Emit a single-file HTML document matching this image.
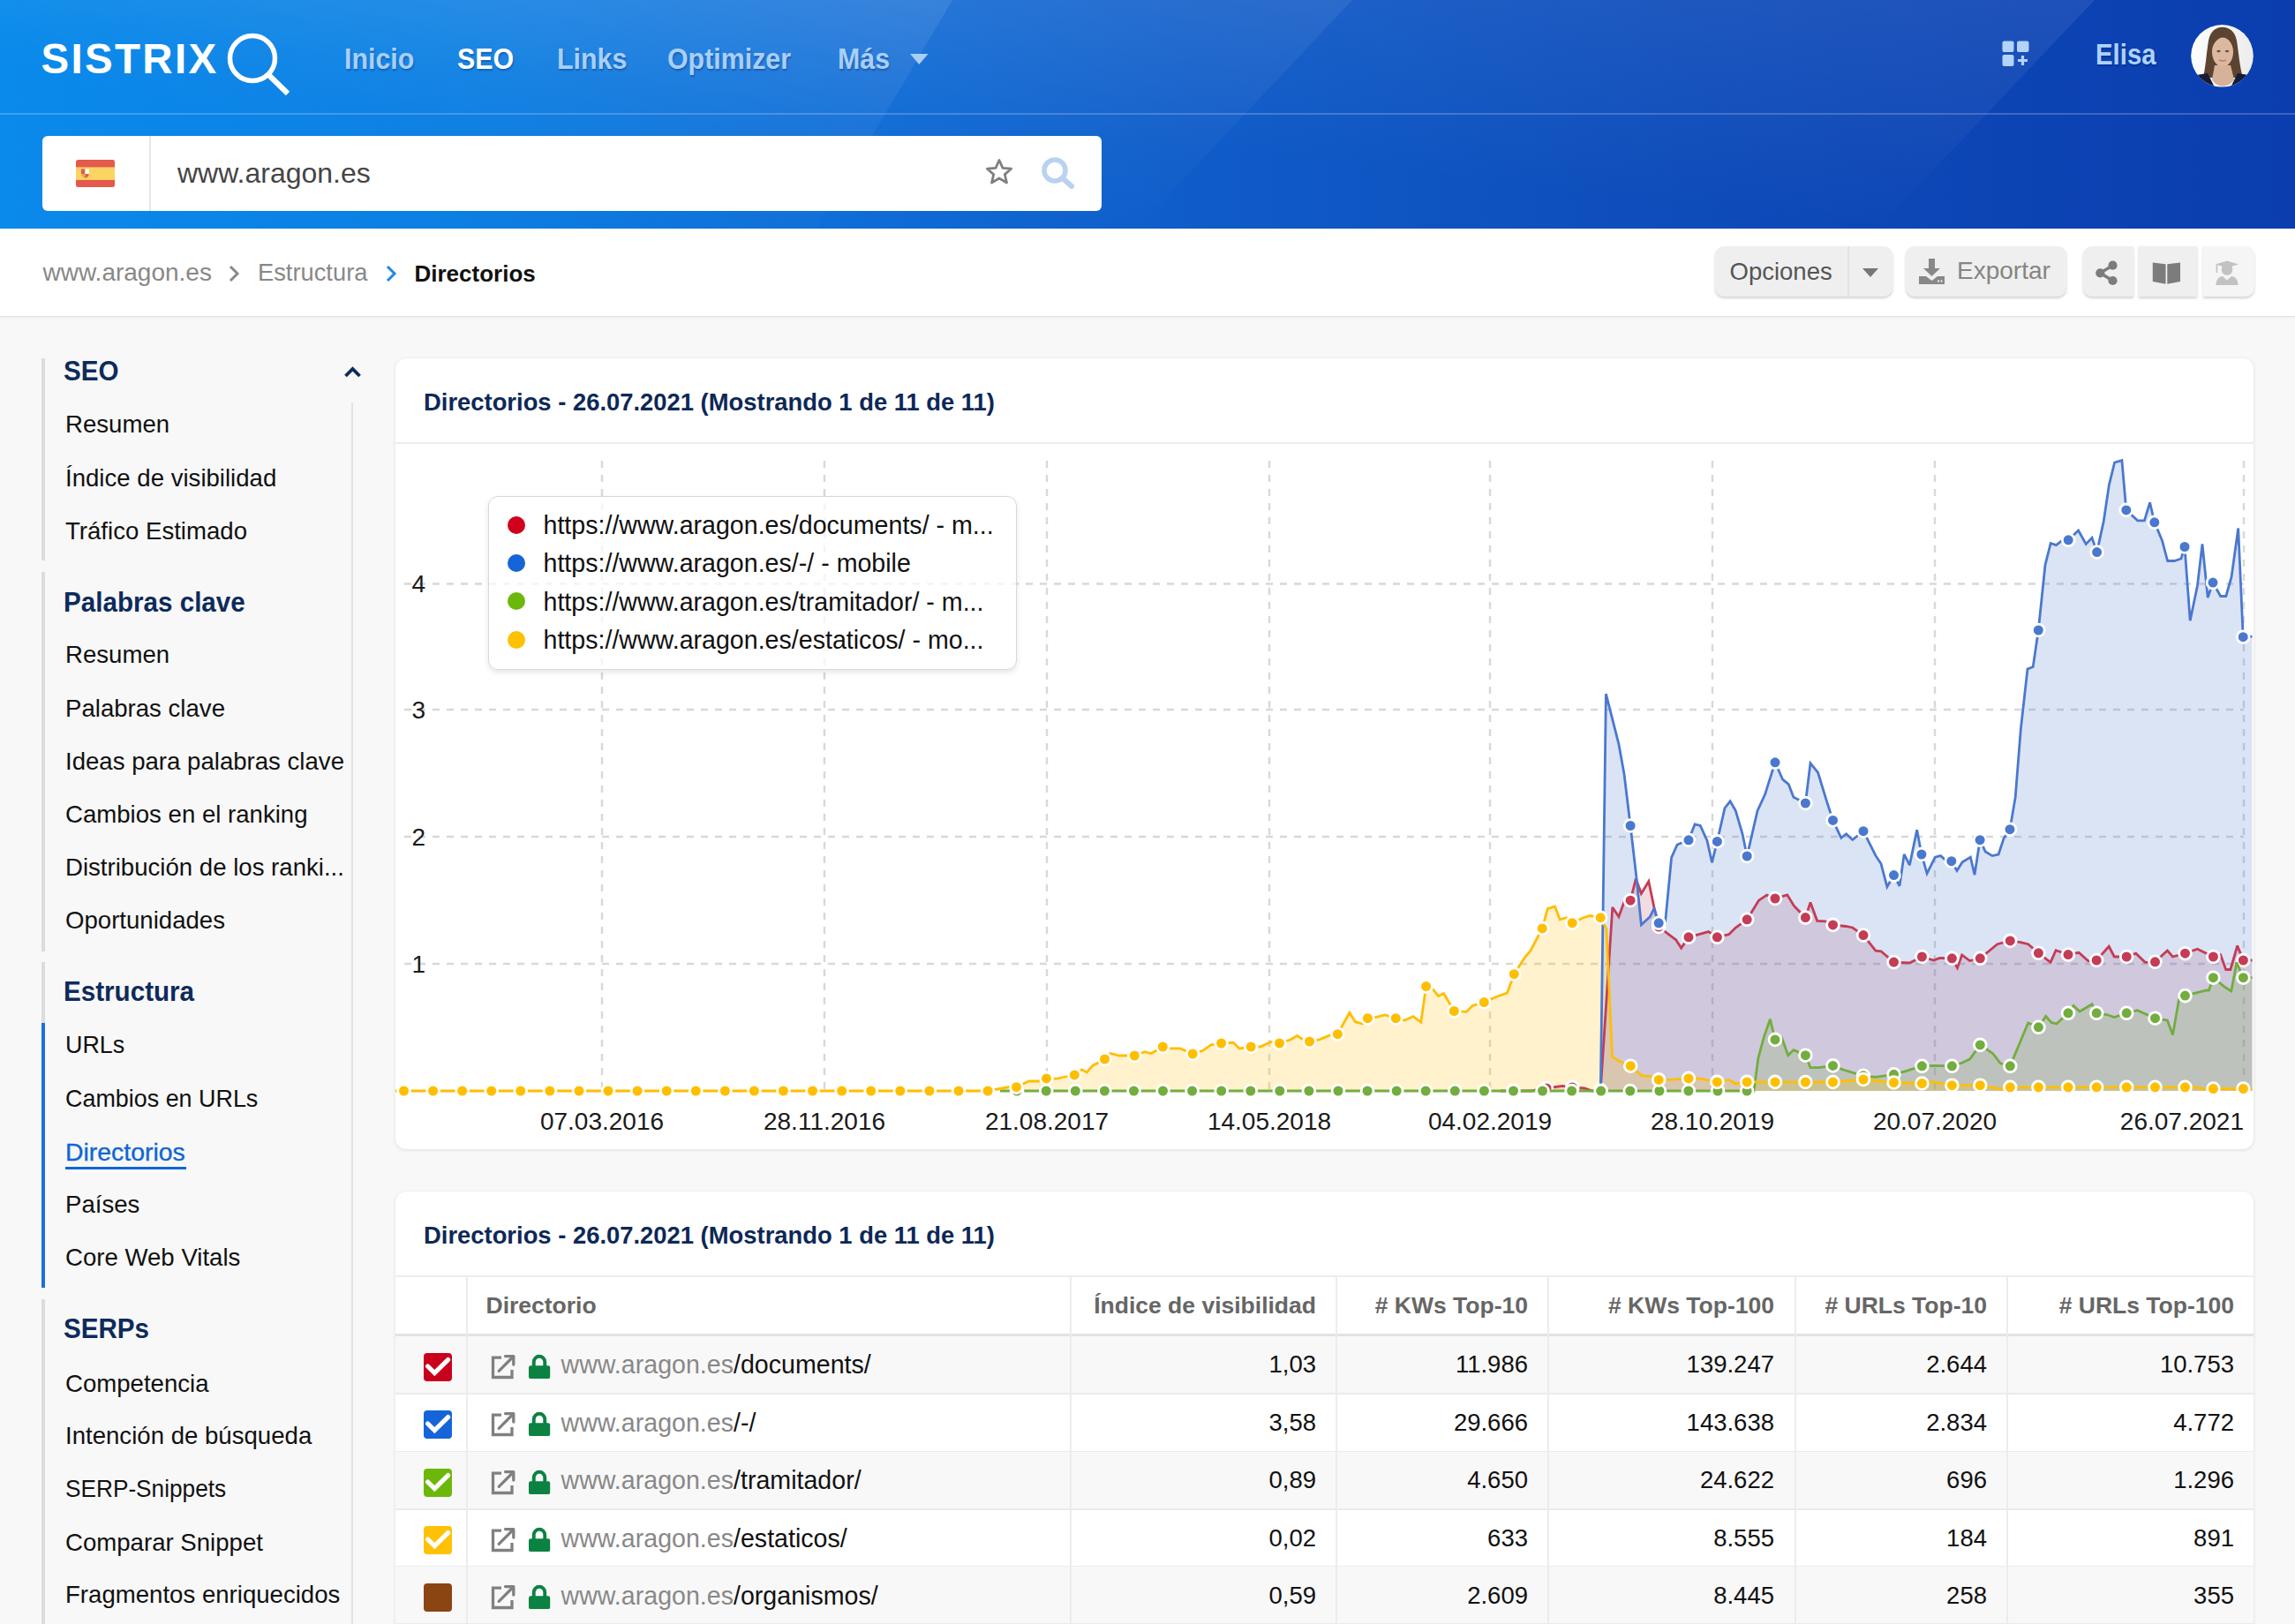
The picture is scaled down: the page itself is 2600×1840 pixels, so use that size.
<!DOCTYPE html><html><head><meta charset="utf-8"><title>SISTRIX</title><style>
*{margin:0;padding:0;box-sizing:border-box}
html,body{width:2600px;height:1840px;overflow:hidden;background:#f8f8f8;font-family:"Liberation Sans",sans-serif;color:#111}
.abs{position:absolute}
.t{position:absolute;white-space:nowrap;line-height:1}
#hdr{position:absolute;left:0;top:0;width:2600px;height:259px;overflow:hidden;
 background:linear-gradient(90deg,#0a8aeb 0%,#0c7fe3 20%,#0f6cd6 38%,#0f5cc9 52%,#0e4dbb 72%,#0b3daf 100%)}
#hdr .band{position:absolute;top:0;left:0;width:2600px;height:259px}
#hline{position:absolute;left:0;top:128px;width:2600px;height:2px;background:rgba(255,255,255,0.20)}
.nav{font-weight:bold;color:#a9cff8;text-shadow:1px 2px 2px rgba(0,20,80,0.30)}
#search{position:absolute;left:48px;top:154px;width:1200px;height:85px;background:#fff;border-radius:6px}
#crumb{position:absolute;left:0;top:259px;width:2600px;height:99px;background:#fff;box-shadow:0 1px 1px rgba(0,0,0,0.07),0 2px 4px rgba(0,0,0,0.04)}
.btn{position:absolute;top:279px;height:57px;background:#efefef;border-radius:10px;box-shadow:0 2px 3px rgba(0,0,0,0.18)}
.sbar{position:absolute;left:47px;width:3.5px;background:#dcdcdc}
.card{position:absolute;left:448px;width:2105px;background:#fff;border-radius:12px;box-shadow:0 1px 4px rgba(0,0,0,0.10),0 0 1px rgba(0,0,0,0.06)}
</style></head><body><div id="root" style="position:relative;width:2600px;height:1840px;overflow:hidden">
<div id="hdr">
<svg class="band" width="2600" height="259"><defs><linearGradient id="gA" x1="0" x2="1" y1="1" y2="0"><stop offset="0.35" stop-color="#fff" stop-opacity="0"/><stop offset="1" stop-color="#fff" stop-opacity="0.09"/></linearGradient><linearGradient id="gB" x1="0" x2="1" y1="1" y2="0"><stop offset="0.4" stop-color="#fff" stop-opacity="0"/><stop offset="1" stop-color="#fff" stop-opacity="0.07"/></linearGradient><linearGradient id="gC" x1="0" x2="1" y1="1" y2="0"><stop offset="0.45" stop-color="#fff" stop-opacity="0"/><stop offset="1" stop-color="#fff" stop-opacity="0.08"/></linearGradient></defs><polygon points="0,0 1079,0 926,259 0,259" fill="url(#gA)"/><polygon points="0,0 1532,0 1288,259 0,259" fill="url(#gB)"/><polygon points="0,0 2373,0 2127,259 0,259" fill="url(#gC)"/></svg>
<div id="hline"></div>
</div>
<div class="t" style="left:46.5px;top:43.18px;font-size:47.5px;font-weight:bold;color:#fff;letter-spacing:2.3px">SISTRIX</div>
<svg class="abs" style="left:252px;top:35px" width="80" height="80"><circle cx="34" cy="31" r="25.5" stroke="#fff" stroke-width="5.5" fill="none"/><path d="M52.5 50 L74 71" stroke="#fff" stroke-width="6.2" stroke-linecap="butt"/></svg>
<div class="t nav" style="left:389.5px;top:50.06px;font-size:33px;font-weight:bold;transform:scaleX(0.92);transform-origin:left 0;color:#a9cff8">Inicio</div>
<div class="t nav" style="left:518px;top:50.06px;font-size:33px;font-weight:bold;transform:scaleX(0.92);transform-origin:left 0;color:#fff">SEO</div>
<div class="t nav" style="left:630.5px;top:50.06px;font-size:33px;font-weight:bold;transform:scaleX(0.92);transform-origin:left 0;color:#a9cff8">Links</div>
<div class="t nav" style="left:755.5px;top:50.06px;font-size:33px;font-weight:bold;transform:scaleX(0.92);transform-origin:left 0;color:#a9cff8">Optimizer</div>
<div class="t nav" style="left:948.5px;top:50.06px;font-size:33px;font-weight:bold;transform:scaleX(0.92);transform-origin:left 0;color:#a9cff8">Más</div>
<svg class="abs" style="left:1031px;top:61px" width="22" height="14"><path d="M0 0 H20.5 L10.25 12 Z" fill="#a9cff8"/></svg>
<svg class="abs" style="left:2268px;top:46px" width="32" height="31"><rect x="0.5" y="0.5" width="13" height="12.5" rx="2" fill="#b3d3fb"/><rect x="17" y="0.5" width="13.5" height="12.5" rx="2" fill="#b3d3fb"/><rect x="0.5" y="16" width="13" height="13" rx="2" fill="#b3d3fb"/><path d="M23.5 17 V28 M18 22.5 H29" stroke="#b3d3fb" stroke-width="3.2"/></svg>
<div class="t nav" style="left:2373.5px;top:44.56px;font-size:33px;font-weight:bold;transform:scaleX(0.89);transform-origin:left 0;color:#aed2ff">Elisa</div>
<svg class="abs" style="left:2482px;top:28px" width="71" height="71" viewBox="0 0 71 71"><defs><clipPath id="av"><circle cx="35.5" cy="35.3" r="35.3"/></clipPath><linearGradient id="avbg" x1="0" x2="1"><stop offset="0" stop-color="#fdfdfd"/><stop offset="1" stop-color="#ececec"/></linearGradient></defs><g clip-path="url(#av)"><rect width="71" height="71" fill="url(#avbg)"/><path d="M14 60 C17 46 18 30 20 18 C22 8 28 2.8 35.5 2.8 C44 2.8 50 8 52 18 C54 30 55 46 59 60 Z" fill="#5d4430"/><ellipse cx="36" cy="31" rx="12" ry="16.5" fill="#dcb8a0"/><path d="M23 30 C22 16 28 8.5 36 8.5 C44 8.5 50 16 49 30 C47 21 43 15 37 13.5 C30 15 25 21 23 30 Z" fill="#5d4430"/><path d="M27 46 L45 46 L49 62 C43 72 29 72 24 62 Z" fill="#d6b29a"/><path d="M17 62 C22 74 50 74 55 62 L58 71 L14 71 Z" fill="#c5d3e8"/><path d="M0 58 L19 55 L27 71 L0 71 Z" fill="#161b36"/><path d="M71 58 L53 55 L45 71 L71 71 Z" fill="#161b36"/><ellipse cx="31.5" cy="30" rx="2.2" ry="1.2" fill="#6a4e3e"/><ellipse cx="41" cy="30" rx="2.2" ry="1.2" fill="#6a4e3e"/><path d="M32 40 Q36 42 40 40" stroke="#c07a7a" stroke-width="1.5" fill="none"/></g></svg>
<div id="search"><div class="abs" style="left:121px;top:0;width:1.5px;height:85px;background:#e6e6e6"></div></div>
<svg class="abs" style="left:86px;top:181px" width="44" height="31" viewBox="0 0 44 31"><rect width="44" height="31" rx="2.5" fill="#e45a4d"/><rect y="8.4" width="44" height="14.5" fill="#fcd462"/><rect x="6" y="10.4" width="4.4" height="5.6" fill="#e45a4d"/><rect x="10.4" y="10.4" width="4.3" height="5.6" fill="#fff"/><path d="M6 16 H10.4 V21 C8 20 6 18.5 6 16 Z" fill="#e3a857"/><path d="M10.4 16 H14.7 C14.7 18.5 12.8 20.5 10.4 21 Z" fill="#e45a4d"/></svg>
<div class="t" style="left:201px;top:179.71px;font-size:32px;color:#454545">www.aragon.es</div>
<svg class="abs" style="left:1115px;top:178px" width="34" height="33" viewBox="0 0 34 33"><path d="M17 3.5 L21 12.3 L30.6 13.2 L23.3 19.6 L25.5 29 L17 24 L8.5 29 L10.7 19.6 L3.4 13.2 L13 12.3 Z" fill="none" stroke="#808080" stroke-width="2.8" stroke-linejoin="round"/></svg>
<svg class="abs" style="left:1178px;top:176px" width="42" height="42"><circle cx="17" cy="17" r="12" stroke="#b9d2f1" stroke-width="5.5" fill="none"/><path d="M26 26 L36 35" stroke="#b9d2f1" stroke-width="6" stroke-linecap="round"/></svg>
<div id="crumb"></div>
<div class="t" style="left:48.5px;top:294.99px;font-size:28px;color:#888">www.aragon.es</div>
<svg class="abs" style="left:258px;top:300px" width="14" height="20"><path d="M3 2 L11 10 L3 18" stroke="#888" stroke-width="3" fill="none"/></svg>
<div class="t" style="left:291.5px;top:295.19px;font-size:28px;transform:scaleX(0.975);transform-origin:left 0;color:#888">Estructura</div>
<svg class="abs" style="left:436px;top:300px" width="14" height="20"><path d="M3 2 L11 10 L3 18" stroke="#1e88e5" stroke-width="3" fill="none"/></svg>
<div class="t" style="left:469.5px;top:296.89px;font-size:26px;font-weight:bold;color:#111">Directorios</div>
<div class="btn" style="left:1943px;width:201px"><div class="abs" style="left:150px;top:0;width:1.5px;height:57px;background:#e2e2e2"></div></div>
<div class="t" style="left:1959.5px;top:293.52px;font-size:27.5px;color:#555">Opciones</div>
<svg class="abs" style="left:2110px;top:303px" width="19" height="12"><path d="M0 1 H18 L9 11 Z" fill="#777"/></svg>
<div class="btn" style="left:2159px;width:182px"></div>
<svg class="abs" style="left:2174px;top:293px" width="30" height="30" viewBox="0 0 30 30"><path d="M11 0 H18 V11 H24 L14.5 20 L5 11 H11 Z" fill="#888"/><path d="M0 20 H8 L14.5 25 L21 20 H29 V29 H0 Z" fill="#888"/><rect x="21" y="24.5" width="2" height="2" fill="#f0f0f0"/><rect x="24.5" y="24.5" width="2" height="2" fill="#f0f0f0"/></svg>
<div class="t" style="left:2217px;top:293.09px;font-size:28px;color:#858585">Exportar</div>
<div class="btn" style="left:2360px;width:57px;border-radius:10px 0 0 10px"></div>
<div class="btn" style="left:2423px;width:66px;border-radius:0"></div>
<div class="btn" style="left:2495.5px;width:58.5px;border-radius:0 10px 10px 0;background:#f5f5f5"></div>
<svg class="abs" style="left:2372px;top:294px" width="30" height="31"><path d="M21.5 6.7 L7.3 15.3 L21.5 24" stroke="#7c7c7c" stroke-width="3.4" fill="none"/><circle cx="21.5" cy="6.7" r="5.1" fill="#7c7c7c"/><circle cx="7.3" cy="15.3" r="5.1" fill="#7c7c7c"/><circle cx="21.5" cy="24" r="5.1" fill="#7c7c7c"/></svg>
<svg class="abs" style="left:2436px;top:295px" width="37" height="29" viewBox="0 0 37 29"><path d="M2.8 2.5 L17.5 4.3 L17.5 26.8 L2.8 24 Z" fill="#7c7c7c"/><path d="M19.3 4.3 L34 2.5 L34 24 L19.3 26.8 Z" fill="#7c7c7c"/></svg>
<svg class="abs" style="left:2509px;top:295px" width="28" height="30" viewBox="0 0 28 30"><path d="M14 0.5 L27 4.5 L14 8.5 L1 4.5 Z" fill="#c2c2c2"/><circle cx="14" cy="10.5" r="6.3" fill="#c2c2c2"/><path d="M1.5 28 C1.5 22 4.5 18.5 9 18 L14 22.5 L19 18 C23.5 18.5 26.5 22 26.5 28 Z" fill="#c2c2c2"/><rect x="1.6" y="5" width="1.6" height="9" fill="#c2c2c2"/></svg>
<div class="sbar" style="top:406px;height:229px"></div>
<div class="sbar" style="top:648px;height:430px"></div>
<div class="sbar" style="top:1090px;height:69px"></div>
<div class="sbar" style="top:1159px;height:300px;background:#1e6fd9"></div>
<div class="sbar" style="top:1472px;height:380px"></div>
<div class="abs" style="left:398px;top:456px;width:1.5px;height:1400px;background:#e2e2e2"></div>
<svg class="abs" style="left:389px;top:414px" width="21" height="15"><path d="M2.5 12 L10.5 4 L18.5 12" stroke="#0d2b5b" stroke-width="3.8" fill="none"/></svg>
<div class="t" style="left:72px;top:404.75px;font-size:31px;font-weight:bold;transform:scaleX(0.955);transform-origin:left 0;color:#0d2b5b">SEO</div>
<div class="t" style="left:72px;top:666.95px;font-size:31px;font-weight:bold;transform:scaleX(0.955);transform-origin:left 0;color:#0d2b5b">Palabras clave</div>
<div class="t" style="left:72px;top:1108.45px;font-size:31px;font-weight:bold;transform:scaleX(0.955);transform-origin:left 0;color:#0d2b5b">Estructura</div>
<div class="t" style="left:72px;top:1489.75px;font-size:31px;font-weight:bold;transform:scaleX(0.955);transform-origin:left 0;color:#0d2b5b">SERPs</div>
<div class="t" style="left:74px;top:467.13px;font-size:27.6px;color:#111">Resumen</div>
<div class="t" style="left:74px;top:527.63px;font-size:27.6px;color:#111">Índice de visibilidad</div>
<div class="t" style="left:74px;top:588.13px;font-size:27.6px;color:#111">Tráfico Estimado</div>
<div class="t" style="left:74px;top:728.23px;font-size:27.6px;color:#111">Resumen</div>
<div class="t" style="left:74px;top:789.23px;font-size:27.6px;color:#111">Palabras clave</div>
<div class="t" style="left:74px;top:849.43px;font-size:27.6px;color:#111">Ideas para palabras clave</div>
<div class="t" style="left:74px;top:909.23px;font-size:27.6px;color:#111">Cambios en el ranking</div>
<div class="t" style="left:74px;top:969.43px;font-size:27.6px;color:#111">Distribución de los ranki...</div>
<div class="t" style="left:74px;top:1028.63px;font-size:27.6px;color:#111">Oportunidades</div>
<div class="t" style="left:74px;top:1170.43px;font-size:27.6px;transform:scaleX(0.975);transform-origin:left 0;color:#111">URLs</div>
<div class="t" style="left:74px;top:1230.63px;font-size:27.6px;transform:scaleX(0.975);transform-origin:left 0;color:#111">Cambios en URLs</div>
<div class="t" style="left:74px;top:1291.63px;font-size:27.6px;transform:scaleX(1.03);transform-origin:left 0;color:#1066d2;-webkit-text-stroke:0.35px #1066d2">Directorios</div>
<div class="t" style="left:74px;top:1350.63px;font-size:27.6px;color:#111">Países</div>
<div class="t" style="left:74px;top:1410.63px;font-size:27.6px;color:#111">Core Web Vitals</div>
<div class="t" style="left:74px;top:1553.63px;font-size:27.6px;color:#111">Competencia</div>
<div class="t" style="left:74px;top:1612.63px;font-size:27.6px;color:#111">Intención de búsqueda</div>
<div class="t" style="left:74px;top:1672.63px;font-size:27.6px;transform:scaleX(0.95);transform-origin:left 0;color:#111">SERP-Snippets</div>
<div class="t" style="left:74px;top:1733.63px;font-size:27.6px;color:#111">Comparar Snippet</div>
<div class="t" style="left:74px;top:1792.63px;font-size:27.6px;color:#111">Fragmentos enriquecidos</div>
<div class="abs" style="left:74px;top:1321.5px;width:137px;height:3.5px;background:#1066d2"></div>
<div class="card" style="top:406px;height:896px"><div class="abs" style="left:0;top:95px;width:2105px;height:1.5px;background:#ececec"></div></div>
<div class="t" style="left:480px;top:440.67px;font-size:28.5px;font-weight:bold;transform:scaleX(0.961);transform-origin:left 0;color:#0d2857">Directorios - 26.07.2021 (Mostrando 1 de 11 de 11)</div>
<svg class="chart" width="2600" height="1840" viewBox="0 0 2600 1840" style="position:absolute;left:0;top:0">
<defs><clipPath id="pc"><rect x="448" y="505" width="2103.5" height="760"/></clipPath></defs>
<path d="M458 661.5 H2542 M458 804 H2542 M458 948 H2542 M458 1092 H2542 M682 522 V1236 M934 522 V1236 M1186 522 V1236 M1438 522 V1236 M1688 522 V1236 M1940 522 V1236 M2192 522 V1236 M2542 522 V1236" stroke="#d8d8d8" stroke-width="2.4" stroke-dasharray="8 8" fill="none"/>
<g clip-path="url(#pc)">
<path d="M1700 1236 L1700 1236 L1734.8 1236 L1752 1233 L1770 1230.4 L1781.3 1232 L1795 1233 L1804 1236 L1813.3 1235 L1826.8 1027.9 L1833.9 1038.7 L1840 1021.7 L1847.1 1020.2 L1853.3 995.6 L1859.4 1012.5 L1867.8 998.6 L1873.9 1027.9 L1879.2 1050 L1892.4 1060.2 L1898.6 1064.8 L1904.7 1074.1 L1913 1061.8 L1924.7 1058.7 L1935.5 1055.6 L1945.4 1061.8 L1958.6 1058.7 L1966.3 1051 L1979.2 1041.8 L1992.5 1020.2 L2001.7 1014 L2011 1018 L2024.8 1014 L2032.5 1026.4 L2045.4 1039.6 L2051 1022.4 L2058.7 1043.3 L2067.9 1043.9 L2076.5 1047.9 L2091 1049.5 L2098.7 1051 L2111 1059.6 L2124.9 1077.2 L2131 1077.8 L2145.5 1090.1 L2163.4 1091 L2177.4 1084 L2190.5 1088 L2197.5 1085.4 L2211.4 1085.8 L2217.5 1096.7 L2222.7 1081.9 L2231.5 1088.5 L2243.3 1085.8 L2262.8 1069.7 L2277.3 1065.9 L2289 1067.6 L2297.7 1069.7 L2309.4 1079.8 L2323 1090.3 L2329.1 1076.7 L2343 1081.6 L2355.2 1079.3 L2365.7 1088.9 L2375.2 1088 L2389.2 1072.3 L2395.3 1084 L2409.2 1084 L2419.7 1080.2 L2430.2 1090.3 L2441.5 1089.8 L2455.4 1077 L2461.5 1084 L2475.5 1080.2 L2489.4 1075.3 L2507.4 1084 L2515.6 1081.6 L2521.7 1098.5 L2526.9 1098.5 L2534.7 1071.5 L2541.4 1088 L2553 1088 L2553 1236 Z" fill="rgba(188,80,109,0.20)" stroke="none"/>
<path d="M1813.3 1236 L1813.3 1236 L1819.4 786.2 L1833.9 843.1 L1840 877 L1847.1 935.5 L1853.9 994 L1859.4 1047.9 L1869.3 1038.7 L1873.9 1029.4 L1879.2 1045.8 L1886.7 1043.6 L1893.6 971.7 L1900.1 957 L1913 951.8 L1920.1 934 L1926.3 935.5 L1934 952.5 L1939.5 977.1 L1945.4 953.4 L1954 915.5 L1960.1 907.8 L1966.3 918.6 L1974 944.8 L1979.2 970 L1991 918.6 L1999.6 900.1 L2011 863.8 L2019.6 883.2 L2026.3 888.7 L2031.9 903.2 L2045.4 910 L2051 864.7 L2059.6 875.5 L2069.5 907.8 L2076.5 929.4 L2085.8 949.4 L2091.6 944.8 L2098.7 951.5 L2111 941.7 L2124.9 969.4 L2131 978.6 L2137.9 1004.8 L2145.5 991.6 L2152 1003.9 L2157.2 967.9 L2163.4 980.2 L2171.7 940.3 L2176.9 968 L2183.1 989.6 L2192.3 971.1 L2198.5 969.6 L2205.6 975.7 L2210.8 975.7 L2217 986.5 L2223.1 976.7 L2232.4 971.1 L2237 991.2 L2243.1 951.7 L2249.3 965 L2257 969.6 L2264.1 968 L2270.2 949.6 L2277 939.7 L2283.2 903.4 L2289.3 826.4 L2297 758 L2303.2 755.6 L2309.3 714 L2317 640.1 L2323.2 615.5 L2329.4 617.6 L2336.1 612.4 L2343.2 611.8 L2354.6 601 L2363.2 616.4 L2370 609.3 L2375.6 625.6 L2383.2 590.8 L2389.4 549.3 L2395.6 524 L2403.9 521.6 L2408.8 577.9 L2421.7 589.9 L2429.4 589.9 L2435.6 569.3 L2440.8 591.8 L2449.5 612.4 L2455.6 635.5 L2463.3 635.5 L2471 633 L2475 619.5 L2481.2 703.2 L2489.5 663.2 L2495 616.4 L2501.2 677 L2507 660.1 L2515.7 675.5 L2521.8 675.5 L2528 654 L2535.7 598.5 L2541.2 721.7 L2553 721 L2553 1236 Z" fill="rgba(74,120,207,0.20)" stroke="none"/>
<path d="M1133 1236 L1133 1236 L1987 1236 L1991.9 1198.8 L1998.6 1174.2 L2005.4 1154.8 L2011 1177.9 L2018.6 1175.7 L2025.7 1195.7 L2031.9 1189.6 L2045.4 1195.7 L2051 1209.6 L2060.2 1209.6 L2076.5 1207.4 L2088 1212 L2111 1218.8 L2124.9 1220.4 L2145.5 1217.3 L2157.2 1214.2 L2177.4 1207.8 L2191.4 1207.4 L2211.4 1207.8 L2222.7 1204.3 L2231.5 1200.1 L2243.3 1183.9 L2257.6 1193.5 L2266.3 1204.8 L2277.3 1207.8 L2289.8 1177.8 L2297.7 1159 L2309.4 1163.8 L2317.7 1151.3 L2323.8 1158.3 L2329.9 1160 L2343 1147.8 L2349.1 1139.4 L2356.1 1146 L2370 1137.7 L2375.2 1147.8 L2386.6 1149.5 L2395.3 1152.5 L2409.2 1147.8 L2421.4 1144.7 L2441.5 1153.7 L2455.4 1156 L2461.5 1172.5 L2468.5 1132.5 L2475.5 1128.1 L2499.9 1122 L2502.5 1122 L2507.4 1107.7 L2520.8 1118.5 L2527.8 1122.9 L2533.9 1090.6 L2541.4 1107.7 L2553 1107.7 L2553 1236 Z" fill="rgba(114,173,62,0.20)" stroke="none"/>
<path d="M447 1236 L447 1236 L457.5 1236 L490.6 1236 L523.7 1236 L556.7 1236 L589.8 1236 L622.9 1236 L656 1236 L689 1236 L722.1 1236 L755.2 1236 L788.3 1236 L821.4 1236 L854.4 1236 L887.5 1236 L920.6 1236 L953.7 1236 L986.7 1236 L1019.8 1236 L1052.9 1236 L1086 1236 L1119.1 1236 L1143.3 1231.5 L1151.5 1231.7 L1165.5 1225 L1177.7 1225 L1185.5 1221.9 L1197.6 1222.2 L1204.6 1220.5 L1217.3 1217.9 L1225.5 1211.8 L1231.3 1215 L1237.8 1207.4 L1251.5 1200 L1257.7 1193.5 L1268.2 1196 L1285.3 1196 L1297 1191.7 L1303.9 1193.8 L1317.3 1186 L1326.6 1187.9 L1337 1187.9 L1351.2 1194 L1362.8 1190.3 L1371.9 1183.9 L1383.6 1182 L1397.2 1181.3 L1404.1 1187.9 L1417.2 1186 L1427.7 1186 L1439.9 1180.4 L1449.5 1182 L1462.5 1177.8 L1469.5 1173.4 L1474.7 1176.9 L1483.6 1180 L1494.8 1177.8 L1505.3 1173.4 L1515.4 1171.7 L1521.8 1160 L1528.8 1147.3 L1535.4 1157.7 L1543.6 1160 L1549.4 1153.7 L1558.4 1152.5 L1568.9 1149.9 L1581.3 1153.7 L1591.5 1156 L1601.1 1151.6 L1609.8 1158.3 L1615.6 1117.6 L1622.9 1120.3 L1629.5 1128.6 L1635.6 1125.5 L1647.3 1145.5 L1661.3 1146.4 L1668.2 1139.4 L1681.3 1135.6 L1696.1 1129 L1707.5 1125.1 L1715.3 1103.7 L1727.5 1084.5 L1733.6 1077.6 L1747.2 1051.9 L1753.3 1029.6 L1761.5 1027 L1767.2 1041.8 L1774.5 1039.7 L1781.2 1045.7 L1793.7 1039.7 L1801.6 1037.5 L1813.2 1039.7 L1819.9 1052.3 L1826.5 1197.5 L1835 1202.5 L1847.3 1207.7 L1860 1218.8 L1872.4 1219.7 L1879.2 1223.4 L1892.4 1223.4 L1913 1221.9 L1924.7 1221.9 L1945.4 1225.9 L1958.6 1223.4 L1966.3 1228 L1979.2 1225.9 L1995.6 1225.9 L2011 1225.9 L2045.4 1226 L2076.5 1226 L2111 1223 L2145.5 1226.5 L2177.4 1227.5 L2190.5 1225.7 L2197.5 1227.5 L2211.4 1229.7 L2224.5 1229.7 L2243.3 1229.7 L2264.6 1233.5 L2277.3 1231.8 L2309.4 1231.8 L2343 1231.8 L2375.2 1231.8 L2409.2 1231.8 L2441.5 1231.8 L2475.5 1231.8 L2486 1231.8 L2496.4 1233.5 L2507.4 1233.5 L2541.4 1233.5 L2553 1233.5 L2553 1236 Z" fill="rgba(255,192,0,0.20)" stroke="none"/>
<path d="M1700 1236 L1734.8 1236 L1752 1233 L1770 1230.4 L1781.3 1232 L1795 1233 L1804 1236 L1813.3 1235 L1826.8 1027.9 L1833.9 1038.7 L1840 1021.7 L1847.1 1020.2 L1853.3 995.6 L1859.4 1012.5 L1867.8 998.6 L1873.9 1027.9 L1879.2 1050 L1892.4 1060.2 L1898.6 1064.8 L1904.7 1074.1 L1913 1061.8 L1924.7 1058.7 L1935.5 1055.6 L1945.4 1061.8 L1958.6 1058.7 L1966.3 1051 L1979.2 1041.8 L1992.5 1020.2 L2001.7 1014 L2011 1018 L2024.8 1014 L2032.5 1026.4 L2045.4 1039.6 L2051 1022.4 L2058.7 1043.3 L2067.9 1043.9 L2076.5 1047.9 L2091 1049.5 L2098.7 1051 L2111 1059.6 L2124.9 1077.2 L2131 1077.8 L2145.5 1090.1 L2163.4 1091 L2177.4 1084 L2190.5 1088 L2197.5 1085.4 L2211.4 1085.8 L2217.5 1096.7 L2222.7 1081.9 L2231.5 1088.5 L2243.3 1085.8 L2262.8 1069.7 L2277.3 1065.9 L2289 1067.6 L2297.7 1069.7 L2309.4 1079.8 L2323 1090.3 L2329.1 1076.7 L2343 1081.6 L2355.2 1079.3 L2365.7 1088.9 L2375.2 1088 L2389.2 1072.3 L2395.3 1084 L2409.2 1084 L2419.7 1080.2 L2430.2 1090.3 L2441.5 1089.8 L2455.4 1077 L2461.5 1084 L2475.5 1080.2 L2489.4 1075.3 L2507.4 1084 L2515.6 1081.6 L2521.7 1098.5 L2526.9 1098.5 L2534.7 1071.5 L2541.4 1088 L2553 1088" fill="none" stroke="#c43c55" stroke-width="2.8" stroke-linejoin="miter" stroke-miterlimit="3"/>
<g fill="#c43c55" stroke="#fff" stroke-width="2.8"><circle cx="1714.5" cy="1236" r="6.9"/><circle cx="1752" cy="1233" r="6.9"/><circle cx="1781.3" cy="1232" r="6.9"/><circle cx="1813.3" cy="1235" r="6.9"/><circle cx="1847.1" cy="1020.2" r="6.9"/><circle cx="1879.2" cy="1050" r="6.9"/><circle cx="1913" cy="1061.8" r="6.9"/><circle cx="1945.4" cy="1061.8" r="6.9"/><circle cx="1979.2" cy="1041.8" r="6.9"/><circle cx="2011" cy="1018" r="6.9"/><circle cx="2045.4" cy="1039.6" r="6.9"/><circle cx="2076.5" cy="1047.9" r="6.9"/><circle cx="2111" cy="1059.6" r="6.9"/><circle cx="2145.5" cy="1090.1" r="6.9"/><circle cx="2177.4" cy="1084" r="6.9"/><circle cx="2211.4" cy="1085.8" r="6.9"/><circle cx="2243.3" cy="1085.8" r="6.9"/><circle cx="2277.3" cy="1065.9" r="6.9"/><circle cx="2309.4" cy="1079.8" r="6.9"/><circle cx="2343" cy="1081.6" r="6.9"/><circle cx="2375.2" cy="1088" r="6.9"/><circle cx="2409.2" cy="1084" r="6.9"/><circle cx="2441.5" cy="1089.8" r="6.9"/><circle cx="2475.5" cy="1080.2" r="6.9"/><circle cx="2507.4" cy="1084" r="6.9"/><circle cx="2541.4" cy="1088" r="6.9"/></g>
<path d="M1813.3 1236 L1819.4 786.2 L1833.9 843.1 L1840 877 L1847.1 935.5 L1853.9 994 L1859.4 1047.9 L1869.3 1038.7 L1873.9 1029.4 L1879.2 1045.8 L1886.7 1043.6 L1893.6 971.7 L1900.1 957 L1913 951.8 L1920.1 934 L1926.3 935.5 L1934 952.5 L1939.5 977.1 L1945.4 953.4 L1954 915.5 L1960.1 907.8 L1966.3 918.6 L1974 944.8 L1979.2 970 L1991 918.6 L1999.6 900.1 L2011 863.8 L2019.6 883.2 L2026.3 888.7 L2031.9 903.2 L2045.4 910 L2051 864.7 L2059.6 875.5 L2069.5 907.8 L2076.5 929.4 L2085.8 949.4 L2091.6 944.8 L2098.7 951.5 L2111 941.7 L2124.9 969.4 L2131 978.6 L2137.9 1004.8 L2145.5 991.6 L2152 1003.9 L2157.2 967.9 L2163.4 980.2 L2171.7 940.3 L2176.9 968 L2183.1 989.6 L2192.3 971.1 L2198.5 969.6 L2205.6 975.7 L2210.8 975.7 L2217 986.5 L2223.1 976.7 L2232.4 971.1 L2237 991.2 L2243.1 951.7 L2249.3 965 L2257 969.6 L2264.1 968 L2270.2 949.6 L2277 939.7 L2283.2 903.4 L2289.3 826.4 L2297 758 L2303.2 755.6 L2309.3 714 L2317 640.1 L2323.2 615.5 L2329.4 617.6 L2336.1 612.4 L2343.2 611.8 L2354.6 601 L2363.2 616.4 L2370 609.3 L2375.6 625.6 L2383.2 590.8 L2389.4 549.3 L2395.6 524 L2403.9 521.6 L2408.8 577.9 L2421.7 589.9 L2429.4 589.9 L2435.6 569.3 L2440.8 591.8 L2449.5 612.4 L2455.6 635.5 L2463.3 635.5 L2471 633 L2475 619.5 L2481.2 703.2 L2489.5 663.2 L2495 616.4 L2501.2 677 L2507 660.1 L2515.7 675.5 L2521.8 675.5 L2528 654 L2535.7 598.5 L2541.2 721.7 L2553 721" fill="none" stroke="#4a78cf" stroke-width="2.8" stroke-linejoin="miter" stroke-miterlimit="3"/>
<g fill="#4a78cf" stroke="#fff" stroke-width="2.8"><circle cx="1813.3" cy="1236" r="6.9"/><circle cx="1847.1" cy="935.5" r="6.9"/><circle cx="1879.2" cy="1045.8" r="6.9"/><circle cx="1913" cy="951.8" r="6.9"/><circle cx="1945.4" cy="953.4" r="6.9"/><circle cx="1979.2" cy="970" r="6.9"/><circle cx="2011" cy="863.8" r="6.9"/><circle cx="2045.4" cy="910" r="6.9"/><circle cx="2076.5" cy="929.4" r="6.9"/><circle cx="2111" cy="941.7" r="6.9"/><circle cx="2145.5" cy="991.6" r="6.9"/><circle cx="2176.9" cy="968" r="6.9"/><circle cx="2210.8" cy="975.7" r="6.9"/><circle cx="2243.1" cy="951.7" r="6.9"/><circle cx="2277" cy="939.7" r="6.9"/><circle cx="2309.3" cy="714" r="6.9"/><circle cx="2343.2" cy="611.8" r="6.9"/><circle cx="2375.6" cy="625.6" r="6.9"/><circle cx="2408.8" cy="577.9" r="6.9"/><circle cx="2440.8" cy="591.8" r="6.9"/><circle cx="2475" cy="619.5" r="6.9"/><circle cx="2507" cy="660.1" r="6.9"/><circle cx="2541.2" cy="721.7" r="6.9"/></g>
<path d="M1133 1236 L1987 1236 L1991.9 1198.8 L1998.6 1174.2 L2005.4 1154.8 L2011 1177.9 L2018.6 1175.7 L2025.7 1195.7 L2031.9 1189.6 L2045.4 1195.7 L2051 1209.6 L2060.2 1209.6 L2076.5 1207.4 L2088 1212 L2111 1218.8 L2124.9 1220.4 L2145.5 1217.3 L2157.2 1214.2 L2177.4 1207.8 L2191.4 1207.4 L2211.4 1207.8 L2222.7 1204.3 L2231.5 1200.1 L2243.3 1183.9 L2257.6 1193.5 L2266.3 1204.8 L2277.3 1207.8 L2289.8 1177.8 L2297.7 1159 L2309.4 1163.8 L2317.7 1151.3 L2323.8 1158.3 L2329.9 1160 L2343 1147.8 L2349.1 1139.4 L2356.1 1146 L2370 1137.7 L2375.2 1147.8 L2386.6 1149.5 L2395.3 1152.5 L2409.2 1147.8 L2421.4 1144.7 L2441.5 1153.7 L2455.4 1156 L2461.5 1172.5 L2468.5 1132.5 L2475.5 1128.1 L2499.9 1122 L2502.5 1122 L2507.4 1107.7 L2520.8 1118.5 L2527.8 1122.9 L2533.9 1090.6 L2541.4 1107.7 L2553 1107.7" fill="none" stroke="#72ad3e" stroke-width="2.8" stroke-linejoin="miter" stroke-miterlimit="3"/>
<g fill="#72ad3e" stroke="#fff" stroke-width="2.8"><circle cx="1152.1" cy="1236" r="6.9"/><circle cx="1185.2" cy="1236" r="6.9"/><circle cx="1218.3" cy="1236" r="6.9"/><circle cx="1251.4" cy="1236" r="6.9"/><circle cx="1284.5" cy="1236" r="6.9"/><circle cx="1317.5" cy="1236" r="6.9"/><circle cx="1350.6" cy="1236" r="6.9"/><circle cx="1383.7" cy="1236" r="6.9"/><circle cx="1416.8" cy="1236" r="6.9"/><circle cx="1449.8" cy="1236" r="6.9"/><circle cx="1482.9" cy="1236" r="6.9"/><circle cx="1516" cy="1236" r="6.9"/><circle cx="1549.1" cy="1236" r="6.9"/><circle cx="1582.2" cy="1236" r="6.9"/><circle cx="1615.2" cy="1236" r="6.9"/><circle cx="1648.3" cy="1236" r="6.9"/><circle cx="1681.4" cy="1236" r="6.9"/><circle cx="1714.5" cy="1236" r="6.9"/><circle cx="1747.5" cy="1236" r="6.9"/><circle cx="1780.6" cy="1236" r="6.9"/><circle cx="1813.7" cy="1236" r="6.9"/><circle cx="1846.8" cy="1236" r="6.9"/><circle cx="1879.9" cy="1236" r="6.9"/><circle cx="1912.9" cy="1236" r="6.9"/><circle cx="1946" cy="1236" r="6.9"/><circle cx="1979.1" cy="1236" r="6.9"/><circle cx="2011" cy="1177.9" r="6.9"/><circle cx="2045.4" cy="1195.7" r="6.9"/><circle cx="2076.5" cy="1207.4" r="6.9"/><circle cx="2111" cy="1218.8" r="6.9"/><circle cx="2145.5" cy="1217.3" r="6.9"/><circle cx="2177.4" cy="1207.8" r="6.9"/><circle cx="2211.4" cy="1207.8" r="6.9"/><circle cx="2243.3" cy="1183.9" r="6.9"/><circle cx="2277.3" cy="1207.8" r="6.9"/><circle cx="2309.4" cy="1163.8" r="6.9"/><circle cx="2343" cy="1147.8" r="6.9"/><circle cx="2375.2" cy="1147.8" r="6.9"/><circle cx="2409.2" cy="1147.8" r="6.9"/><circle cx="2441.5" cy="1153.7" r="6.9"/><circle cx="2475.5" cy="1128.1" r="6.9"/><circle cx="2507.4" cy="1107.7" r="6.9"/><circle cx="2541.4" cy="1107.7" r="6.9"/></g>
<path d="M447 1236 L457.5 1236 L490.6 1236 L523.7 1236 L556.7 1236 L589.8 1236 L622.9 1236 L656 1236 L689 1236 L722.1 1236 L755.2 1236 L788.3 1236 L821.4 1236 L854.4 1236 L887.5 1236 L920.6 1236 L953.7 1236 L986.7 1236 L1019.8 1236 L1052.9 1236 L1086 1236 L1119.1 1236 L1143.3 1231.5 L1151.5 1231.7 L1165.5 1225 L1177.7 1225 L1185.5 1221.9 L1197.6 1222.2 L1204.6 1220.5 L1217.3 1217.9 L1225.5 1211.8 L1231.3 1215 L1237.8 1207.4 L1251.5 1200 L1257.7 1193.5 L1268.2 1196 L1285.3 1196 L1297 1191.7 L1303.9 1193.8 L1317.3 1186 L1326.6 1187.9 L1337 1187.9 L1351.2 1194 L1362.8 1190.3 L1371.9 1183.9 L1383.6 1182 L1397.2 1181.3 L1404.1 1187.9 L1417.2 1186 L1427.7 1186 L1439.9 1180.4 L1449.5 1182 L1462.5 1177.8 L1469.5 1173.4 L1474.7 1176.9 L1483.6 1180 L1494.8 1177.8 L1505.3 1173.4 L1515.4 1171.7 L1521.8 1160 L1528.8 1147.3 L1535.4 1157.7 L1543.6 1160 L1549.4 1153.7 L1558.4 1152.5 L1568.9 1149.9 L1581.3 1153.7 L1591.5 1156 L1601.1 1151.6 L1609.8 1158.3 L1615.6 1117.6 L1622.9 1120.3 L1629.5 1128.6 L1635.6 1125.5 L1647.3 1145.5 L1661.3 1146.4 L1668.2 1139.4 L1681.3 1135.6 L1696.1 1129 L1707.5 1125.1 L1715.3 1103.7 L1727.5 1084.5 L1733.6 1077.6 L1747.2 1051.9 L1753.3 1029.6 L1761.5 1027 L1767.2 1041.8 L1774.5 1039.7 L1781.2 1045.7 L1793.7 1039.7 L1801.6 1037.5 L1813.2 1039.7 L1819.9 1052.3 L1826.5 1197.5 L1835 1202.5 L1847.3 1207.7 L1860 1218.8 L1872.4 1219.7 L1879.2 1223.4 L1892.4 1223.4 L1913 1221.9 L1924.7 1221.9 L1945.4 1225.9 L1958.6 1223.4 L1966.3 1228 L1979.2 1225.9 L1995.6 1225.9 L2011 1225.9 L2045.4 1226 L2076.5 1226 L2111 1223 L2145.5 1226.5 L2177.4 1227.5 L2190.5 1225.7 L2197.5 1227.5 L2211.4 1229.7 L2224.5 1229.7 L2243.3 1229.7 L2264.6 1233.5 L2277.3 1231.8 L2309.4 1231.8 L2343 1231.8 L2375.2 1231.8 L2409.2 1231.8 L2441.5 1231.8 L2475.5 1231.8 L2486 1231.8 L2496.4 1233.5 L2507.4 1233.5 L2541.4 1233.5 L2553 1233.5" fill="none" stroke="#ffbe00" stroke-width="2.8" stroke-linejoin="miter" stroke-miterlimit="3"/>
<g fill="#ffbe00" stroke="#fff" stroke-width="2.8"><circle cx="457.5" cy="1236" r="6.9"/><circle cx="490.6" cy="1236" r="6.9"/><circle cx="523.7" cy="1236" r="6.9"/><circle cx="556.7" cy="1236" r="6.9"/><circle cx="589.8" cy="1236" r="6.9"/><circle cx="622.9" cy="1236" r="6.9"/><circle cx="656" cy="1236" r="6.9"/><circle cx="689" cy="1236" r="6.9"/><circle cx="722.1" cy="1236" r="6.9"/><circle cx="755.2" cy="1236" r="6.9"/><circle cx="788.3" cy="1236" r="6.9"/><circle cx="821.4" cy="1236" r="6.9"/><circle cx="854.4" cy="1236" r="6.9"/><circle cx="887.5" cy="1236" r="6.9"/><circle cx="920.6" cy="1236" r="6.9"/><circle cx="953.7" cy="1236" r="6.9"/><circle cx="986.7" cy="1236" r="6.9"/><circle cx="1019.8" cy="1236" r="6.9"/><circle cx="1052.9" cy="1236" r="6.9"/><circle cx="1086" cy="1236" r="6.9"/><circle cx="1119.1" cy="1236" r="6.9"/><circle cx="1151.5" cy="1231.7" r="6.9"/><circle cx="1185.5" cy="1221.9" r="6.9"/><circle cx="1217.3" cy="1217.9" r="6.9"/><circle cx="1251.5" cy="1200" r="6.9"/><circle cx="1285.3" cy="1196" r="6.9"/><circle cx="1317.3" cy="1186" r="6.9"/><circle cx="1351.2" cy="1194" r="6.9"/><circle cx="1383.6" cy="1182" r="6.9"/><circle cx="1417.2" cy="1186" r="6.9"/><circle cx="1449.5" cy="1182" r="6.9"/><circle cx="1483.6" cy="1180" r="6.9"/><circle cx="1515.4" cy="1171.7" r="6.9"/><circle cx="1549.4" cy="1153.7" r="6.9"/><circle cx="1581.3" cy="1153.7" r="6.9"/><circle cx="1615.6" cy="1117.6" r="6.9"/><circle cx="1647.3" cy="1145.5" r="6.9"/><circle cx="1681.3" cy="1135.6" r="6.9"/><circle cx="1715.3" cy="1103.7" r="6.9"/><circle cx="1747.2" cy="1051.9" r="6.9"/><circle cx="1781.2" cy="1045.7" r="6.9"/><circle cx="1813.2" cy="1039.7" r="6.9"/><circle cx="1847.3" cy="1207.7" r="6.9"/><circle cx="1879.2" cy="1223.4" r="6.9"/><circle cx="1913" cy="1221.9" r="6.9"/><circle cx="1945.4" cy="1225.9" r="6.9"/><circle cx="1979.2" cy="1225.9" r="6.9"/><circle cx="2011" cy="1225.9" r="6.9"/><circle cx="2045.4" cy="1226" r="6.9"/><circle cx="2076.5" cy="1226" r="6.9"/><circle cx="2111" cy="1223" r="6.9"/><circle cx="2145.5" cy="1226.5" r="6.9"/><circle cx="2177.4" cy="1227.5" r="6.9"/><circle cx="2211.4" cy="1229.7" r="6.9"/><circle cx="2243.3" cy="1229.7" r="6.9"/><circle cx="2277.3" cy="1231.8" r="6.9"/><circle cx="2309.4" cy="1231.8" r="6.9"/><circle cx="2343" cy="1231.8" r="6.9"/><circle cx="2375.2" cy="1231.8" r="6.9"/><circle cx="2409.2" cy="1231.8" r="6.9"/><circle cx="2441.5" cy="1231.8" r="6.9"/><circle cx="2475.5" cy="1231.8" r="6.9"/><circle cx="2507.4" cy="1233.5" r="6.9"/><circle cx="2541.4" cy="1233.5" r="6.9"/></g>
</g>
<g font-family="Liberation Sans, sans-serif" font-size="28" fill="#1a1a1a"><text x="482" y="671.0" text-anchor="end">4</text><text x="482" y="813.5" text-anchor="end">3</text><text x="482" y="957.5" text-anchor="end">2</text><text x="482" y="1101.5" text-anchor="end">1</text><text x="682" y="1280" text-anchor="middle">07.03.2016</text><text x="934" y="1280" text-anchor="middle">28.11.2016</text><text x="1186" y="1280" text-anchor="middle">21.08.2017</text><text x="1438" y="1280" text-anchor="middle">14.05.2018</text><text x="1688" y="1280" text-anchor="middle">04.02.2019</text><text x="1940" y="1280" text-anchor="middle">28.10.2019</text><text x="2192" y="1280" text-anchor="middle">20.07.2020</text><text x="2542" y="1280" text-anchor="end">26.07.2021</text></g>
</svg>
<div class="abs" style="left:553px;top:562px;width:599px;height:197px;background:rgba(255,255,255,0.72);border:1.5px solid #d8d8d8;border-radius:11px;box-shadow:0 3px 6px rgba(0,0,0,0.10)"></div>
<div class="abs" style="left:575px;top:584.6px;width:20px;height:20px;border-radius:50%;background:#d0021b"></div>
<div class="t" style="left:615.5px;top:580.78px;font-size:28.6px;color:#111">https://www.aragon.es/documents/ - m...</div>
<div class="abs" style="left:575px;top:628.0px;width:20px;height:20px;border-radius:50%;background:#1565d8"></div>
<div class="t" style="left:615.5px;top:624.18px;font-size:28.6px;color:#111">https://www.aragon.es/-/ - mobile</div>
<div class="abs" style="left:575px;top:671.4px;width:20px;height:20px;border-radius:50%;background:#6cb80a"></div>
<div class="t" style="left:615.5px;top:667.58px;font-size:28.6px;color:#111">https://www.aragon.es/tramitador/ - m...</div>
<div class="abs" style="left:575px;top:714.8px;width:20px;height:20px;border-radius:50%;background:#ffc000"></div>
<div class="t" style="left:615.5px;top:710.98px;font-size:28.6px;color:#111">https://www.aragon.es/estaticos/ - mo...</div>
<div class="card" style="top:1350px;height:600px;overflow:hidden">
<div class="abs" style="left:0;top:95px;width:2105px;height:1.5px;background:#ececec"></div>
</div>
<div class="t" style="left:480px;top:1384.67px;font-size:28.5px;font-weight:bold;transform:scaleX(0.961);transform-origin:left 0;color:#0d2857">Directorios - 26.07.2021 (Mostrando 1 de 11 de 11)</div>
<div class="abs" style="left:448px;top:1511px;width:2105px;height:3px;background:#e2e2e2;box-shadow:0 2px 3px rgba(0,0,0,0.08)"></div>
<div class="t" style="left:550.5px;top:1465.56px;font-size:26.5px;font-weight:bold;color:#666">Directorio</div>
<div class="t" style="right:1109px;top:1465.56px;font-size:26.5px;font-weight:bold;color:#666">Índice de visibilidad</div>
<div class="t" style="right:869px;top:1465.56px;font-size:26.5px;font-weight:bold;color:#666"># KWs Top-10</div>
<div class="t" style="right:590px;top:1465.56px;font-size:26.5px;font-weight:bold;color:#666"># KWs Top-100</div>
<div class="t" style="right:349px;top:1465.56px;font-size:26.5px;font-weight:bold;color:#666"># URLs Top-10</div>
<div class="t" style="right:69px;top:1465.56px;font-size:26.5px;font-weight:bold;color:#666"># URLs Top-100</div>
<div class="abs" style="left:448px;top:1514.0px;width:2105px;height:65.3px;background:#f8f8f8"></div>
<div class="abs" style="left:448px;top:1578.2px;width:2105px;height:2px;background:#ebebeb"></div>
<div class="abs" style="left:480px;top:1533.0px;width:32px;height:32px;border-radius:4px;background:#c8001e"></div>
<svg class="abs" style="left:480px;top:1533.0px" width="32" height="32"><path d="M4.6 15 L12.3 22.6 L27.6 7.6" stroke="#fff" stroke-width="5.2" stroke-linecap="round" stroke-linejoin="miter" fill="none"/></svg>
<svg class="abs" style="left:555px;top:1533.0px" width="30" height="30" viewBox="0 0 30 30"><path d="M13 5.2 H3.5 V27.5 H25 V19" stroke="#808080" stroke-width="3.3" fill="none"/><path d="M10.2 20.3 L26 4.5" stroke="#808080" stroke-width="3.3" stroke-linecap="round"/><path d="M17.5 3.6 H26.8 V13" stroke="#808080" stroke-width="3.3" stroke-linecap="round" stroke-linejoin="round" fill="none"/></svg>
<svg class="abs" style="left:598px;top:1533.0px" width="26" height="30" viewBox="0 0 26 30"><path d="M6.75 15 V10 A6.25 6.25 0 0 1 19.25 10 V15" stroke="#0b8242" stroke-width="3.9" fill="none"/><rect x="1" y="14.3" width="24.2" height="14.8" rx="2.2" fill="#0b8242"/></svg>
<div class="t" style="left:635.5px;top:1532.18px;font-size:28.6px;color:#111"><span style="color:#888">www.aragon.es</span>/documents/</div>
<div class="t" style="right:1109px;top:1532.32px;font-size:27.5px;color:#111">1,03</div>
<div class="t" style="right:869px;top:1532.32px;font-size:27.5px;color:#111">11.986</div>
<div class="t" style="right:590px;top:1532.32px;font-size:27.5px;color:#111">139.247</div>
<div class="t" style="right:349px;top:1532.32px;font-size:27.5px;color:#111">2.644</div>
<div class="t" style="right:69px;top:1532.32px;font-size:27.5px;color:#111">10.753</div>
<div class="abs" style="left:448px;top:1643.5px;width:2105px;height:2px;background:#ebebeb"></div>
<div class="abs" style="left:480px;top:1598.3px;width:32px;height:32px;border-radius:4px;background:#1565d8"></div>
<svg class="abs" style="left:480px;top:1598.3px" width="32" height="32"><path d="M4.6 15 L12.3 22.6 L27.6 7.6" stroke="#fff" stroke-width="5.2" stroke-linecap="round" stroke-linejoin="miter" fill="none"/></svg>
<svg class="abs" style="left:555px;top:1598.3px" width="30" height="30" viewBox="0 0 30 30"><path d="M13 5.2 H3.5 V27.5 H25 V19" stroke="#808080" stroke-width="3.3" fill="none"/><path d="M10.2 20.3 L26 4.5" stroke="#808080" stroke-width="3.3" stroke-linecap="round"/><path d="M17.5 3.6 H26.8 V13" stroke="#808080" stroke-width="3.3" stroke-linecap="round" stroke-linejoin="round" fill="none"/></svg>
<svg class="abs" style="left:598px;top:1598.3px" width="26" height="30" viewBox="0 0 26 30"><path d="M6.75 15 V10 A6.25 6.25 0 0 1 19.25 10 V15" stroke="#0b8242" stroke-width="3.9" fill="none"/><rect x="1" y="14.3" width="24.2" height="14.8" rx="2.2" fill="#0b8242"/></svg>
<div class="t" style="left:635.5px;top:1597.68px;font-size:28.6px;color:#111"><span style="color:#888">www.aragon.es</span>/-/</div>
<div class="t" style="right:1109px;top:1597.82px;font-size:27.5px;color:#111">3,58</div>
<div class="t" style="right:869px;top:1597.82px;font-size:27.5px;color:#111">29.666</div>
<div class="t" style="right:590px;top:1597.82px;font-size:27.5px;color:#111">143.638</div>
<div class="t" style="right:349px;top:1597.82px;font-size:27.5px;color:#111">2.834</div>
<div class="t" style="right:69px;top:1597.82px;font-size:27.5px;color:#111">4.772</div>
<div class="abs" style="left:448px;top:1644.6px;width:2105px;height:65.3px;background:#f8f8f8"></div>
<div class="abs" style="left:448px;top:1708.8px;width:2105px;height:2px;background:#ebebeb"></div>
<div class="abs" style="left:480px;top:1663.6px;width:32px;height:32px;border-radius:4px;background:#6cb80a"></div>
<svg class="abs" style="left:480px;top:1663.6px" width="32" height="32"><path d="M4.6 15 L12.3 22.6 L27.6 7.6" stroke="#fff" stroke-width="5.2" stroke-linecap="round" stroke-linejoin="miter" fill="none"/></svg>
<svg class="abs" style="left:555px;top:1663.6px" width="30" height="30" viewBox="0 0 30 30"><path d="M13 5.2 H3.5 V27.5 H25 V19" stroke="#808080" stroke-width="3.3" fill="none"/><path d="M10.2 20.3 L26 4.5" stroke="#808080" stroke-width="3.3" stroke-linecap="round"/><path d="M17.5 3.6 H26.8 V13" stroke="#808080" stroke-width="3.3" stroke-linecap="round" stroke-linejoin="round" fill="none"/></svg>
<svg class="abs" style="left:598px;top:1663.6px" width="26" height="30" viewBox="0 0 26 30"><path d="M6.75 15 V10 A6.25 6.25 0 0 1 19.25 10 V15" stroke="#0b8242" stroke-width="3.9" fill="none"/><rect x="1" y="14.3" width="24.2" height="14.8" rx="2.2" fill="#0b8242"/></svg>
<div class="t" style="left:635.5px;top:1663.18px;font-size:28.6px;color:#111"><span style="color:#888">www.aragon.es</span>/tramitador/</div>
<div class="t" style="right:1109px;top:1663.32px;font-size:27.5px;color:#111">0,89</div>
<div class="t" style="right:869px;top:1663.32px;font-size:27.5px;color:#111">4.650</div>
<div class="t" style="right:590px;top:1663.32px;font-size:27.5px;color:#111">24.622</div>
<div class="t" style="right:349px;top:1663.32px;font-size:27.5px;color:#111">696</div>
<div class="t" style="right:69px;top:1663.32px;font-size:27.5px;color:#111">1.296</div>
<div class="abs" style="left:448px;top:1774.1px;width:2105px;height:2px;background:#ebebeb"></div>
<div class="abs" style="left:480px;top:1728.9px;width:32px;height:32px;border-radius:4px;background:#ffc107"></div>
<svg class="abs" style="left:480px;top:1728.9px" width="32" height="32"><path d="M4.6 15 L12.3 22.6 L27.6 7.6" stroke="#fff" stroke-width="5.2" stroke-linecap="round" stroke-linejoin="miter" fill="none"/></svg>
<svg class="abs" style="left:555px;top:1728.9px" width="30" height="30" viewBox="0 0 30 30"><path d="M13 5.2 H3.5 V27.5 H25 V19" stroke="#808080" stroke-width="3.3" fill="none"/><path d="M10.2 20.3 L26 4.5" stroke="#808080" stroke-width="3.3" stroke-linecap="round"/><path d="M17.5 3.6 H26.8 V13" stroke="#808080" stroke-width="3.3" stroke-linecap="round" stroke-linejoin="round" fill="none"/></svg>
<svg class="abs" style="left:598px;top:1728.9px" width="26" height="30" viewBox="0 0 26 30"><path d="M6.75 15 V10 A6.25 6.25 0 0 1 19.25 10 V15" stroke="#0b8242" stroke-width="3.9" fill="none"/><rect x="1" y="14.3" width="24.2" height="14.8" rx="2.2" fill="#0b8242"/></svg>
<div class="t" style="left:635.5px;top:1728.68px;font-size:28.6px;color:#111"><span style="color:#888">www.aragon.es</span>/estaticos/</div>
<div class="t" style="right:1109px;top:1728.82px;font-size:27.5px;color:#111">0,02</div>
<div class="t" style="right:869px;top:1728.82px;font-size:27.5px;color:#111">633</div>
<div class="t" style="right:590px;top:1728.82px;font-size:27.5px;color:#111">8.555</div>
<div class="t" style="right:349px;top:1728.82px;font-size:27.5px;color:#111">184</div>
<div class="t" style="right:69px;top:1728.82px;font-size:27.5px;color:#111">891</div>
<div class="abs" style="left:448px;top:1775.2px;width:2105px;height:65.3px;background:#f8f8f8"></div>
<div class="abs" style="left:448px;top:1839.4px;width:2105px;height:2px;background:#ebebeb"></div>
<div class="abs" style="left:480px;top:1794.2px;width:32px;height:32px;border-radius:4px;background:#8b4513"></div>
<svg class="abs" style="left:555px;top:1794.2px" width="30" height="30" viewBox="0 0 30 30"><path d="M13 5.2 H3.5 V27.5 H25 V19" stroke="#808080" stroke-width="3.3" fill="none"/><path d="M10.2 20.3 L26 4.5" stroke="#808080" stroke-width="3.3" stroke-linecap="round"/><path d="M17.5 3.6 H26.8 V13" stroke="#808080" stroke-width="3.3" stroke-linecap="round" stroke-linejoin="round" fill="none"/></svg>
<svg class="abs" style="left:598px;top:1794.2px" width="26" height="30" viewBox="0 0 26 30"><path d="M6.75 15 V10 A6.25 6.25 0 0 1 19.25 10 V15" stroke="#0b8242" stroke-width="3.9" fill="none"/><rect x="1" y="14.3" width="24.2" height="14.8" rx="2.2" fill="#0b8242"/></svg>
<div class="t" style="left:635.5px;top:1794.18px;font-size:28.6px;color:#111"><span style="color:#888">www.aragon.es</span>/organismos/</div>
<div class="t" style="right:1109px;top:1794.32px;font-size:27.5px;color:#111">0,59</div>
<div class="t" style="right:869px;top:1794.32px;font-size:27.5px;color:#111">2.609</div>
<div class="t" style="right:590px;top:1794.32px;font-size:27.5px;color:#111">8.445</div>
<div class="t" style="right:349px;top:1794.32px;font-size:27.5px;color:#111">258</div>
<div class="t" style="right:69px;top:1794.32px;font-size:27.5px;color:#111">355</div>
<div class="abs" style="left:528px;top:1446px;width:2px;height:400px;background:#ececec"></div>
<div class="abs" style="left:1212px;top:1446px;width:2px;height:400px;background:#ececec"></div>
<div class="abs" style="left:1513px;top:1446px;width:2px;height:400px;background:#ececec"></div>
<div class="abs" style="left:1753px;top:1446px;width:2px;height:400px;background:#ececec"></div>
<div class="abs" style="left:2033px;top:1446px;width:2px;height:400px;background:#ececec"></div>
<div class="abs" style="left:2273px;top:1446px;width:2px;height:400px;background:#ececec"></div>
</div></body></html>
